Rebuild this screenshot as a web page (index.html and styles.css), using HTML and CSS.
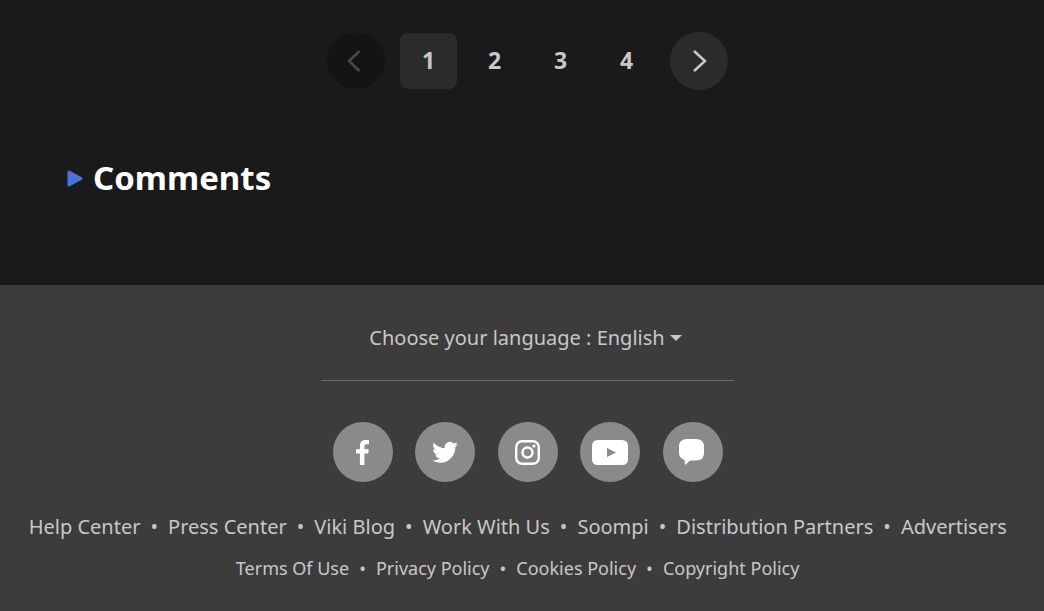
FILE: index.html
```html
<!DOCTYPE html>
<html lang="en">
<head>
    <meta charset="UTF-8">
    <meta name="viewport" content="width=device-width, initial-scale=1.0">
    <title>Comments</title>
    <link rel="stylesheet" href="styles.css">
</head>
<body>
    <div class="main">
        <nav class="pagination">
            <a class="page-arrow page-arrow-disabled" href="#">
                <svg width="16" height="24" viewBox="0 0 16 24"><path d="M12.500 2 2 12 12.500 22" /></svg>
            </a>
            <div class="page-numbers">
                <a class="page-num active" href="#">1</a>
                <a class="page-num" href="#">2</a>
                <a class="page-num" href="#">3</a>
                <a class="page-num" href="#">4</a>
            </div>
            <a class="page-arrow page-arrow-next" href="#">
                <svg width="16" height="24" viewBox="0 0 16 24"><path d="M3 2 14 12 3 22" /></svg>
            </a>
        </nav>

        <h2 class="section-title">
            <svg class="title-marker" width="16" height="17" viewBox="0 0 16 17">
                <defs>
                    <linearGradient id="marker-fill" x1="0" y1="0" x2="0" y2="1">
                        <stop offset="0" stop-color="#7060d8" />
                        <stop offset="1" stop-color="#2f80e0" />
                    </linearGradient>
                </defs>
                <path d="M2 2 14 8.500 2 15Z" fill="url(#marker-fill)" stroke="url(#marker-fill)" stroke-width="3" stroke-linejoin="round" />
            </svg>
            Comments
        </h2>
    </div>

    <footer class="footer">
        <div class="language">
            <span>Choose your language : English</span>
            <span class="caret"></span>
        </div>
        <div class="divider"></div>

        <div class="social">
            <a class="social-btn" href="#">
                <svg width="13" height="25" viewBox="0 0 13 25"><path d="M8.400 25V13.600h3.800l.6-4.400H8.400V6.400c0-1.300.4-2.100 2.200-2.100H13V.2C12.600.1 11.200 0 9.600 0 6.200 0 3.900 2 3.900 5.800v3.400H0v4.400h3.900V25z" /></svg>
            </a>
            <a class="social-btn" href="#">
                <svg width="26" height="22" viewBox="0 1.500 24 20.500"><path d="M23.953 4.570a10 10 0 0 1-2.825.775 4.958 4.958 0 0 0 2.163-2.723c-.951.555-2.005.959-3.127 1.184a4.920 4.920 0 0 0-8.384 4.482C7.690 8.095 4.067 6.130 1.640 3.162a4.822 4.822 0 0 0-.666 2.475c0 1.710.870 3.213 2.188 4.096a4.904 4.904 0 0 1-2.228-.616v.060a4.923 4.923 0 0 0 3.946 4.827 4.996 4.996 0 0 1-2.212.085 4.936 4.936 0 0 0 4.604 3.417 9.867 9.867 0 0 1-6.102 2.105c-.390 0-.779-.023-1.170-.067a13.995 13.995 0 0 0 7.557 2.209c9.053 0 13.998-7.496 13.998-13.985 0-.210 0-.420-.015-.630A9.935 9.935 0 0 0 24 4.590z" /></svg>
            </a>
            <a class="social-btn" href="#">
                <svg width="25" height="25" viewBox="0 0 25 25">
                    <rect x="1.200" y="1.200" width="22.600" height="22.600" rx="6" fill="none" stroke="#fff" stroke-width="2.400" />
                    <circle cx="12.500" cy="12.500" r="5" fill="none" stroke="#fff" stroke-width="2.400" />
                    <circle cx="19" cy="6" r="1.600" />
                </svg>
            </a>
            <a class="social-btn" href="#">
                <svg width="36" height="25" viewBox="0 0 36 25"><path fill-rule="evenodd" d="M6 0h24q6 0 6 6v13q0 6-6 6H6q-6 0-6-6V6q0-6 6-6ZM15 8v9l9-4.500Z" /></svg>
            </a>
            <a class="social-btn social-btn-viki" href="#">
                <svg width="25" height="26" viewBox="0 0 25 26"><path d="M8 0h9q8 0 8 8v6q0 7.500-8 7.500h-6L6 26l-.5-5Q0 19 0 14V8q0-8 8-8Z" /></svg>
            </a>
        </div>

        <ul class="links links-main">
            <li><a href="#">Help Center</a></li>
            <li><a href="#">Press Center</a></li>
            <li><a href="#">Viki Blog</a></li>
            <li><a href="#">Work With Us</a></li>
            <li><a href="#">Soompi</a></li>
            <li><a href="#">Distribution Partners</a></li>
            <li><a href="#">Advertisers</a></li>
        </ul>
        <ul class="links links-legal">
            <li><a href="#">Terms Of Use</a></li>
            <li><a href="#">Privacy Policy</a></li>
            <li><a href="#">Cookies Policy</a></li>
            <li><a href="#">Copyright Policy</a></li>
        </ul>
    </footer>
</body>
</html>
```

FILE: styles.css
```css
html, body {
    margin: 0;
    padding: 0;
}
body {
    background-color: #1a1a1a;
    font-family: 'Noto Sans', sans-serif;
    overflow: hidden;
    height: 611px;
}
a {
    color: inherit;
    text-decoration: none;
}
.main {
    height: 285px;
    box-sizing: border-box;
    padding-top: 32px;
}
/* Pagination */
.pagination {
    display: flex;
    justify-content: center;
    align-items: center;
    gap: 15px;
    padding-left: 11px;
}
.page-numbers {
    display: flex;
    gap: 9px;
}
.page-num {
    width: 57px;
    height: 56px;
    border-radius: 8px;
    display: flex;
    align-items: center;
    justify-content: center;
    padding-bottom: 2px;
    box-sizing: border-box;
    color: #c8c8c8;
    font-size: 23px;
    font-weight: 700;
}
.page-num.active {
    background-color: #2b2b2b;
}
.page-arrow {
    width: 58px;
    height: 58px;
    border-radius: 50%;
    display: flex;
    align-items: center;
    justify-content: center;
    background-color: #2b2b2b;
}
.page-arrow path {
    fill: none;
    stroke: #c8c8c8;
    stroke-width: 2.500;
}
.page-arrow-disabled {
    height: 56px;
    background-color: #141414;
}
.page-arrow-disabled svg {
    margin-right: 3px;
}
.page-arrow-disabled path {
    stroke: #4a4a4a;
}
.section-title {
    display: flex;
    align-items: center;
    gap: 10px;
    margin: 66px 0 0 67px;
    color: #fff;
    font-size: 33px;
    line-height: 44px;
    font-weight: 700;
}
.title-marker {
    margin-top: 1px;
}
/* Footer */
.footer {
    height: 326px;
    box-sizing: border-box;
    padding: 37px 0 0 11px;
    background-color: #3c3c3c;
    color: #c8c8c8;
    display: flex;
    flex-direction: column;
    align-items: center;
}
.language {
    display: flex;
    align-items: center;
    gap: 5px;
    margin-left: -4px;
    font-size: 20px;
    line-height: 32px;
}
.caret {
    width: 0;
    height: 0;
    border-left: 6px solid transparent;
    border-right: 6px solid transparent;
    border-top: 6px solid #c8c8c8;
}
.divider {
    width: 413px;
    height: 1px;
    margin-top: 26px;
    background-color: #6a6a6a;
}
.social {
    display: flex;
    gap: 22.500px;
    margin-top: 41px;
}
.social-btn {
    width: 60px;
    height: 60px;
    border-radius: 50%;
    display: flex;
    align-items: center;
    justify-content: center;
    background-color: #8a8a8a;
}
.social-btn svg {
    fill: #fff;
}
.social-btn-viki svg {
    margin-right: 2px;
}
.links {
    display: flex;
    list-style: none;
    margin: 0;
    padding: 0;
    white-space: nowrap;
}
.links li::after {
    content: "•";
    display: inline-block;
    text-align: center;
}
.links li:last-child::after {
    visibility: hidden;
}
.links-main {
    margin-top: 30px;
    margin-left: 8px;
    font-size: 20px;
    line-height: 30px;
}
.links-main li::after {
    width: 27.600px;
    font-size: 20px;
}
.links-legal {
    margin-top: 12px;
    margin-left: 7px;
    font-size: 18px;
    line-height: 28px;
}
.links-legal li::after {
    width: 26.800px;
    font-size: 18px;
}
```
